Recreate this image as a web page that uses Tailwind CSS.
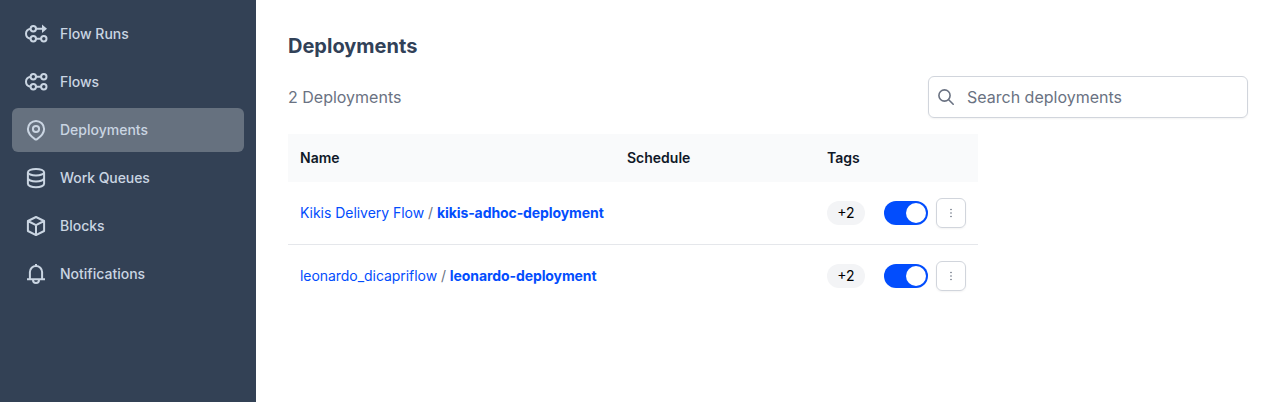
<!DOCTYPE html>
<html lang="en">
<head>
<meta charset="utf-8">
<title>Deployments</title>
<script src="https://cdn.jsdelivr.net/npm/@tailwindcss/browser@4"></script>
</head>
<body class="flex h-[402px] overflow-hidden bg-white font-['Inter',sans-serif] antialiased">
<nav class="flex w-64 shrink-0 flex-col gap-1 bg-[#334155] px-3 pt-3 text-sm font-medium text-slate-300">
  <a class="flex h-11 items-center gap-3 rounded-md px-3">
    <svg class="size-6" viewBox="0 0 24 24" fill="none" stroke="currentColor" stroke-width="2"><circle cx="9.3" cy="6.8" r="2.7"/><circle cx="9.3" cy="16.8" r="2.7"/><circle cx="19.8" cy="16.8" r="2.7"/><path d="M12 6.8h7M12 16.8h5M6.7 6.8C3.7 7.3 2 9.2 2 11.8s1.7 4.5 4.700 5"/><path d="M18 2.600 23 6.800l-5 4.200z" fill="currentColor" stroke="none"/></svg>
    Flow Runs</a>
  <a class="flex h-11 items-center gap-3 rounded-md px-3">
    <svg class="size-6" viewBox="0 0 24 24" fill="none" stroke="currentColor" stroke-width="2"><circle cx="9.3" cy="6.8" r="2.7"/><circle cx="19.8" cy="6.8" r="2.7"/><circle cx="9.3" cy="16.8" r="2.7"/><circle cx="19.8" cy="16.8" r="2.7"/><path d="M12 6.8h5M12 16.8h5M6.7 6.8C3.7 7.3 2 9.2 2 11.8s1.7 4.5 4.7 5"/></svg>
    Flows</a>
  <a class="flex h-11 items-center gap-3 rounded-md bg-[#66717f] px-3">
    <svg class="size-6" viewBox="0 0 24 24" fill="none" stroke="currentColor" stroke-width="2" stroke-linejoin="round"><path d="M12 2.900a8.100 8.100 0 0 0-8.100 8.100c0 4.300 3.300 7.600 7.300 10.300q.8.500 1.600 0c4-2.700 7.300-6 7.300-10.300A8.100 8.100 0 0 0 12 2.900z"/><circle cx="12" cy="11" r="3.100"/></svg>
    Deployments</a>
  <a class="flex h-11 items-center gap-3 rounded-md px-3">
    <svg class="size-6" viewBox="0 0 24 24" fill="none" stroke="currentColor" stroke-width="2"><ellipse cx="12" cy="6.200" rx="8.100" ry="3.300"/><path d="M3.900 6.200v11.600c0 1.900 3.600 3.400 8.100 3.400s8.100-1.500 8.100-3.400V6.200M3.900 12c0 1.900 3.600 3.500 8.100 3.500s8.100-1.600 8.100-3.500"/></svg>
    <span class="tracking-[-0.07px]">Work Queues</span></a>
  <a class="flex h-11 items-center gap-3 rounded-md px-3">
    <svg class="size-6" viewBox="0 0 24 24" fill="none" stroke="currentColor" stroke-width="2" stroke-linejoin="round"><path d="M12 3 20.100 7v10L12 21.100 3.900 17V7zM3.900 7 12 11.200 20.100 7M12 11.200v10"/></svg>
    Blocks</a>
  <a class="flex h-11 items-center gap-3 rounded-md px-3">
    <svg class="size-6" viewBox="0 0 24 24" fill="none" stroke="currentColor" stroke-width="2" stroke-linejoin="round"><path d="M12 2v2M3 17.300h18M5.900 17.300V10a6.100 6.100 0 0 1 12.200 0v7.300M9 18a3 3 0 0 0 6 0"/></svg>
    Notifications</a>
</nav>
<main class="flex flex-1 flex-col px-8 pt-8">
  <h1 class="text-xl leading-7 font-bold text-slate-700">Deployments</h1>
  <div class="mt-4 flex h-[42px] items-center justify-between text-gray-500">
    <span>2 Deployments</span>
    <div class="flex h-[42px] w-80 items-center gap-[11px] rounded-md border border-gray-300 px-[7px] shadow-xs">
      <svg class="size-5" viewBox="0 0 20 20" fill="none" stroke="currentColor" stroke-width="1.600" stroke-linecap="round"><circle cx="8.500" cy="8.500" r="5.600"/><path d="m12.700 12.700 4.500 4.500"/></svg>
      <span>Search deployments</span>
    </div>
  </div>
  <section class="mt-4 w-[690px] text-sm">
    <div class="flex h-12 items-center bg-gray-50 px-3 font-semibold text-gray-900">
      <span class="w-[327px]">Name</span><span class="w-[200px]">Schedule</span><span>Tags</span>
    </div>
    <div class="flex h-[63px] items-center border-b border-gray-200 px-3">
      <div class="w-[527px] text-gray-500"><span class="tracking-[-0.035px]"><a class="text-[#024dfd]">Kikis Delivery Flow</a> / </span><a class="font-bold tracking-[-0.09px] text-[#024dfd]">kikis-adhoc-deployment</a></div>
      <span class="flex h-6 w-[38px] items-center justify-center rounded-full bg-gray-100 text-black">+2</span>
      <div class="ml-[19px] flex h-6 w-11 items-center justify-end rounded-full bg-[#024dfd] p-0.5"><i class="size-5 rounded-full bg-white"></i></div>
      <div class="ml-2 flex h-[30px] w-[30px] items-center justify-center rounded-md border border-gray-300 text-gray-500 shadow-xs"><svg class="h-4 w-4" viewBox="0 0 16 16" fill="currentColor"><circle cx="8" cy="4.500" r=".8"/><circle cx="8" cy="8" r=".8"/><circle cx="8" cy="11.500" r=".8"/></svg></div>
    </div>
    <div class="flex h-[62px] items-center px-3">
      <div class="w-[527px] text-gray-500"><span class="tracking-[-0.05px]"><a class="text-[#024dfd]">leonardo_dicapriflow</a> / </span><a class="font-bold tracking-[-0.09px] text-[#024dfd]">leonardo-deployment</a></div>
      <span class="flex h-6 w-[38px] items-center justify-center rounded-full bg-gray-100 text-black">+2</span>
      <div class="ml-[19px] flex h-6 w-11 items-center justify-end rounded-full bg-[#024dfd] p-0.5"><i class="size-5 rounded-full bg-white"></i></div>
      <div class="ml-2 flex h-[30px] w-[30px] items-center justify-center rounded-md border border-gray-300 text-gray-500 shadow-xs"><svg class="h-4 w-4" viewBox="0 0 16 16" fill="currentColor"><circle cx="8" cy="4.500" r=".8"/><circle cx="8" cy="8" r=".8"/><circle cx="8" cy="11.500" r=".8"/></svg></div>
    </div>
  </section>
</main>
</body>
</html>
